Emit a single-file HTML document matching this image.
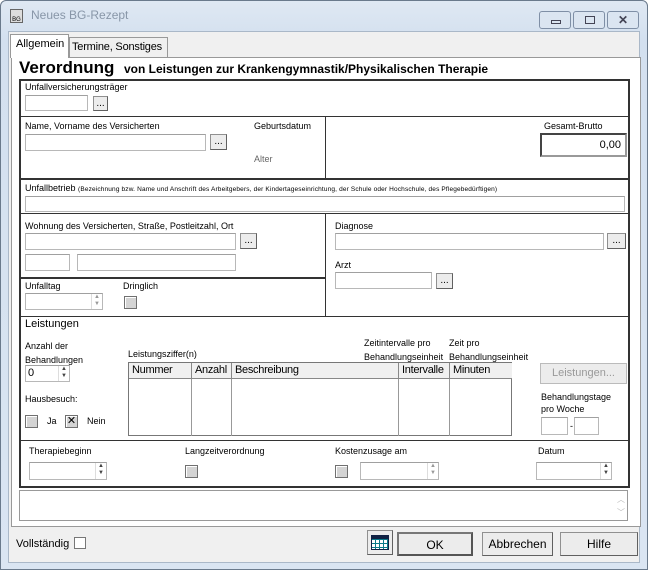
<!DOCTYPE html>
<html><head><meta charset="utf-8"><style>
*{margin:0;padding:0;box-sizing:border-box}
body{width:648px;height:570px;overflow:hidden;font-family:"Liberation Sans",sans-serif;font-size:9px;color:#000;background:#fff}
.a{position:absolute}
.win{position:absolute;left:0;top:0;width:648px;height:570px;background:linear-gradient(#dfe8f3,#d3e0ef 40px,#dae5f2);border:1px solid #6a7a8c;border-radius:6px 6px 0 0}
.client{position:absolute;left:8px;top:31px;width:632px;height:532px;background:#f0f0f0;border:1px solid #aab8c8}
.in{position:absolute;background:#fff;border:1px solid #b8b8b8;border-top-color:#a0a0a0}
.btn{position:absolute;background:#ececec;border:1px solid #909090;border-right-color:#606060;border-bottom-color:#606060;text-align:center;font-size:10px;line-height:13px}
.cb{position:absolute;width:13px;height:13px;background:#d4d4d4;border:1px solid #707070;box-shadow:1px 1px 0 #fff inset}
.sp{position:absolute;width:11px;border-left:1px solid #ddd;font-size:6px;line-height:7px;text-align:center;color:#444}
.h{position:absolute;background:#333}
.t{position:absolute;white-space:nowrap}
.th{position:absolute;top:0;height:16px;border-right:1px solid #888;border-bottom:1px solid #888;background:#f0f0f0;font-size:11px;padding-left:3px;line-height:15px;letter-spacing:-0.3px}
</style></head><body>
<div class="win">
<div class="a" style="left:9px;top:8px;width:13px;height:14px;border:1px solid #666;background:#ddd;font-size:6px;line-height:20px;text-align:center">BG</div>
<div class="t" style="left:30px;top:7px;font-size:12px;color:#8896a8">Neues BG-Rezept</div>
<div class="a" style="left:538px;top:10px;width:32px;height:18px;border:1px solid #7f8fa6;border-radius:3px;background:#dbe5f1"><div class="a" style="left:11px;top:8px;width:10px;height:4px;border:1px solid #445"></div></div>
<div class="a" style="left:572px;top:10px;width:32px;height:18px;border:1px solid #7f8fa6;border-radius:3px;background:#dbe5f1"><div class="a" style="left:11px;top:4px;width:10px;height:8px;border:1px solid #445"></div></div>
<div class="a" style="left:606px;top:10px;width:32px;height:18px;border:1px solid #7f8fa6;border-radius:3px;background:#dbe5f1;text-align:center;font-size:12px;font-weight:bold;color:#445;line-height:16px">✕</div>
</div>
<div class="client"></div>
<!-- tabs -->
<div class="a" style="left:69px;top:37px;width:99px;height:21px;border:1px solid #999;border-bottom:none;background:#f0f0f0"></div>
<div class="t" style="left:72px;top:41px;font-size:11px;letter-spacing:-0.2px">Termine, Sonstiges</div>
<div class="a" style="left:11px;top:57px;width:630px;height:470px;background:#fff;border:1px solid #999"></div>
<div class="a" style="left:10px;top:34px;width:59px;height:24px;border:1px solid #999;border-bottom:none;background:#fff"></div>
<div class="t" style="left:16px;top:38px;font-size:11px">Allgemein</div>
<div class="t" style="left:19px;top:58px;font-size:17px;font-weight:bold">Verordnung</div>
<div class="t" style="left:124px;top:62px;font-size:12px;font-weight:bold">von Leistungen zur Krankengymnastik/Physikalischen Therapie</div>
<!-- main box -->
<div class="a" style="left:19px;top:79px;width:611px;height:409px;border:2px solid #333"></div>
<div class="h" style="left:19px;top:116px;width:611px;height:1px"></div>
<div class="h" style="left:19px;top:178px;width:611px;height:2px"></div>
<div class="h" style="left:19px;top:213px;width:611px;height:1px"></div>
<div class="h" style="left:19px;top:277px;width:307px;height:2px"></div>
<div class="h" style="left:19px;top:316px;width:611px;height:1px"></div>
<div class="h" style="left:19px;top:440px;width:611px;height:1px"></div>
<div class="h" style="left:325px;top:116px;width:1px;height:62px"></div>
<div class="h" style="left:325px;top:213px;width:1px;height:104px"></div>

<div class="t" style="left:25px;top:82px">Unfallversicherungsträger</div>
<div class="in" style="left:25px;top:95px;width:63px;height:16px"></div>
<div class="btn" style="left:93px;top:96px;width:15px;height:15px">...</div>
<div class="t" style="left:25px;top:121px">Name, Vorname des Versicherten</div>
<div class="in" style="left:25px;top:134px;width:181px;height:17px"></div>
<div class="btn" style="left:210px;top:134px;width:17px;height:16px">...</div>
<div class="t" style="left:254px;top:121px">Geburtsdatum</div>
<div class="t" style="left:254px;top:154px;color:#666">Alter</div>
<div class="t" style="left:544px;top:121px">Gesamt-Brutto</div>
<div class="a" style="left:540px;top:133px;width:87px;height:24px;border:2px solid #444;border-right-color:#999;border-bottom-color:#999;font-size:11px;text-align:right;padding-right:4px;line-height:20px">0,00</div>
<div class="t" style="left:25px;top:183px">Unfallbetrieb <span style="font-size:6.5px;letter-spacing:0.15px">(Bezeichnung bzw. Name und Anschrift des Arbeitgebers, der Kindertageseinrichtung, der Schule oder Hochschule, des Pflegebedürftigen)</span></div>
<div class="in" style="left:25px;top:196px;width:600px;height:16px"></div>

<div class="t" style="left:25px;top:221px">Wohnung des Versicherten, Straße, Postleitzahl, Ort</div>
<div class="in" style="left:25px;top:233px;width:211px;height:17px"></div>
<div class="btn" style="left:240px;top:233px;width:17px;height:16px">...</div>
<div class="in" style="left:25px;top:254px;width:45px;height:17px"></div>
<div class="in" style="left:77px;top:254px;width:159px;height:17px"></div>
<div class="t" style="left:335px;top:221px">Diagnose</div>
<div class="in" style="left:335px;top:233px;width:269px;height:17px"></div>
<div class="btn" style="left:607px;top:233px;width:19px;height:16px">...</div>
<div class="t" style="left:335px;top:260px">Arzt</div>
<div class="in" style="left:335px;top:272px;width:97px;height:17px"></div>
<div class="btn" style="left:436px;top:273px;width:17px;height:16px">...</div>
<div class="t" style="left:25px;top:281px">Unfalltag</div>
<div class="in" style="left:25px;top:293px;width:78px;height:17px"><div class="sp" style="right:0;top:0;height:15px;color:#999">▲<br>▼</div></div>
<div class="t" style="left:123px;top:281px">Dringlich</div>
<div class="cb" style="left:124px;top:296px"></div>

<div class="t" style="left:25px;top:318px;font-size:11px">Leistungen</div>
<div class="t" style="left:25px;top:339px;line-height:14px">Anzahl der<br>Behandlungen</div>
<div class="in" style="left:25px;top:365px;width:45px;height:17px;font-size:11px;padding-left:2px;line-height:15px">0<div class="sp" style="right:0;top:0;height:15px">▲<br>▼</div></div>
<div class="t" style="left:128px;top:349px">Leistungsziffer(n)</div>
<div class="t" style="left:364px;top:336px;line-height:14px">Zeitintervalle pro<br>Behandlungseinheit</div>
<div class="t" style="left:449px;top:336px;line-height:14px">Zeit pro<br>Behandlungseinheit</div>
<div class="a" style="left:128px;top:362px;width:384px;height:74px;border:1px solid #777;background:#fff">
<div class="th" style="left:0;width:63px">Nummer</div>
<div class="th" style="left:63px;width:40px">Anzahl</div>
<div class="th" style="left:103px;width:167px">Beschreibung</div>
<div class="th" style="left:270px;width:51px">Intervalle</div>
<div class="th" style="left:321px;width:62px;border-right:none">Minuten</div>
<div class="a" style="left:62px;top:16px;width:1px;height:57px;background:#999"></div>
<div class="a" style="left:102px;top:16px;width:1px;height:57px;background:#999"></div>
<div class="a" style="left:269px;top:16px;width:1px;height:57px;background:#999"></div>
<div class="a" style="left:320px;top:16px;width:1px;height:57px;background:#999"></div>
</div>
<div class="btn" style="left:540px;top:363px;width:87px;height:21px;color:#999;font-size:11px;line-height:19px;border-color:#bbb">Leistungen...</div>
<div class="t" style="left:541px;top:391px;line-height:12px">Behandlungstage<br>pro Woche</div>
<div class="in" style="left:541px;top:417px;width:27px;height:18px"></div>
<div class="t" style="left:570px;top:421px">-</div>
<div class="in" style="left:574px;top:417px;width:25px;height:18px"></div>
<div class="t" style="left:25px;top:394px">Hausbesuch:</div>
<div class="cb" style="left:25px;top:415px"></div>
<div class="t" style="left:47px;top:416px">Ja</div>
<div class="cb" style="left:65px;top:415px;font-size:11px;line-height:10px;text-align:center">✕</div>
<div class="t" style="left:87px;top:416px">Nein</div>

<div class="t" style="left:29px;top:446px">Therapiebeginn</div>
<div class="in" style="left:29px;top:462px;width:78px;height:18px"><div class="sp" style="right:0;top:0;height:16px">▲<br>▼</div></div>
<div class="t" style="left:185px;top:446px">Langzeitverordnung</div>
<div class="cb" style="left:185px;top:465px"></div>
<div class="t" style="left:335px;top:446px">Kostenzusage am</div>
<div class="cb" style="left:335px;top:465px"></div>
<div class="in" style="left:360px;top:462px;width:79px;height:18px"><div class="sp" style="right:0;top:0;height:16px;color:#999">▲<br>▼</div></div>
<div class="t" style="left:538px;top:446px">Datum</div>
<div class="in" style="left:536px;top:462px;width:76px;height:18px"><div class="sp" style="right:0;top:0;height:16px">▲<br>▼</div></div>

<div class="a" style="left:19px;top:490px;width:609px;height:31px;border:1px solid #999;background:#fff"><div class="t" style="right:2px;top:2px;font-size:8px;color:#bbb;line-height:13px">︿<br>﹀</div></div>

<div class="t" style="left:16px;top:538px;font-size:11px">Vollständig</div>
<div class="a" style="left:74px;top:537px;width:12px;height:12px;border:1px solid #777;background:#fff"></div>
<div class="btn" style="left:367px;top:530px;width:26px;height:25px;padding:4px 3px">
<div style="width:18px;height:15px;border:1px solid #124;background:#fff;background-image:linear-gradient(#124 3px,transparent 3px),repeating-linear-gradient(90deg,transparent 0 3px,#0a7a8a 3px 4px),repeating-linear-gradient(transparent 0 3px,#0a7a8a 3px 4px)"></div></div>
<div class="btn" style="left:397px;top:532px;width:76px;height:24px;font-size:12px;line-height:22px;border:2px solid #555;border-top-color:#777;border-left-color:#777">OK</div>
<div class="btn" style="left:482px;top:532px;width:71px;height:24px;font-size:12px;line-height:22px">Abbrechen</div>
<div class="btn" style="left:560px;top:532px;width:78px;height:24px;font-size:12px;line-height:22px">Hilfe</div>
</body></html>
